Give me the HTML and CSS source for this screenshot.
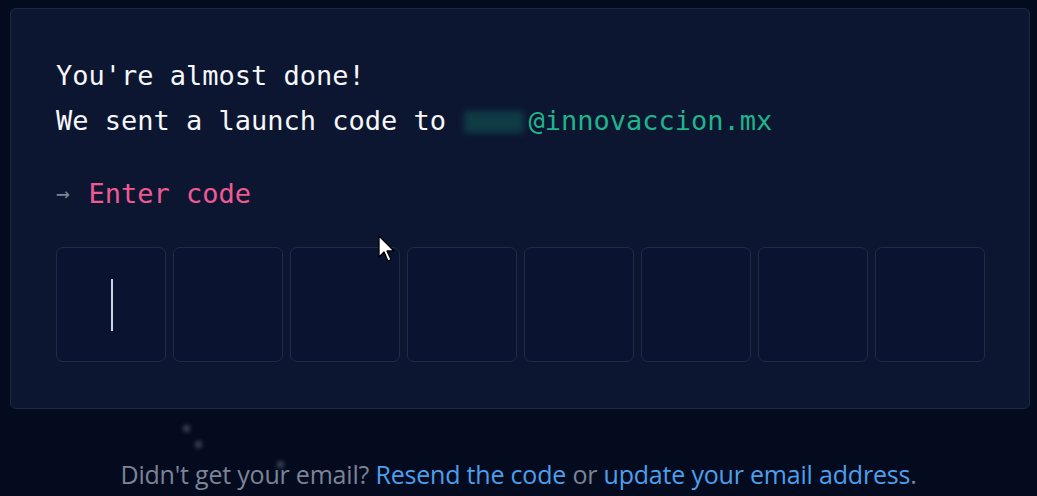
FILE: index.html
```html
<!DOCTYPE html>
<html>
<head>
<meta charset="utf-8">
<link rel="stylesheet" href="styles.css">
</head>
<body>
<main class="page">
  <section class="card">
    <p class="line">You're almost done!</p>
    <p class="line">We sent a launch code to <span class="blur"></span><span class="email">@innovaccion.mx</span></p>
    <p class="prompt"><span class="arrow">→</span> <span class="label">Enter code</span></p>
    <div class="codes">
      <div class="box"><span class="caret"></span></div>
      <div class="box"></div>
      <div class="box"></div>
      <div class="box"></div>
      <div class="box"></div>
      <div class="box"></div>
      <div class="box"></div>
      <div class="box"></div>
    </div>
    <svg class="pointer" width="18" height="28" viewBox="0 0 18 28"><path d="M1 1 L1 22 L6 17 L10 26 L13 24.5 L9 16 L16 16 Z" fill="#fff" stroke="#000" stroke-width="1.3" stroke-linejoin="round"/></svg>
  </section>
  <span class="dot d1"></span><span class="dot d2"></span><span class="dot d3"></span>
  <p class="footer">Didn't get your email? <a class="link">Resend the code</a> or <a class="link">update your email address</a>.</p>
</main>
</body>
</html>
```
FILE: styles.css
```css
html, body {
  margin: 0;
  padding: 0;
  background: #050b1e;
  height: 100%;
  overflow: hidden;
}
.page {
  position: relative;
  padding-top: 8px;
}
.card {
  position: relative;
  margin: 0 7px 0 10px;
  height: 401px;
  box-sizing: border-box;
  background: #0c1631;
  border: 1px solid #1d2845;
  border-radius: 6px;
  padding: 44px 0 0 45px;
  font-family: "DejaVu Sans Mono", monospace;
  font-size: 27px;
  color: #f5f7fa;
}
.line {
  margin: 0;
  line-height: 45px;
  height: 45px;
  white-space: pre;
}
.blur {
  display: inline-block;
  width: 60px;
  height: 22px;
  margin-left: 2px;
  margin-right: 4px;
  vertical-align: -3px;
  background: #0f3b45;
  filter: blur(3px);
  border-radius: 3px;
}
.email {
  color: #1fb48a;
}
.prompt {
  margin: 28px 0 0;
  line-height: 45px;
  height: 45px;
  white-space: pre;
}
.arrow {
  display: inline-block;
  width: 16.25px;
  color: #7b8496;
  font-size: 23px;
  vertical-align: 2px;
}
.label {
  color: #ef5a93;
}
.codes {
  display: flex;
  gap: 7px;
  margin-top: 31px;
}
.box {
  position: relative;
  width: 110px;
  height: 115px;
  box-sizing: border-box;
  border: 1px solid #1f2b49;
  border-radius: 7px;
  background: #0a1430;
  display: flex;
  align-items: center;
  justify-content: center;
}
.caret {
  width: 2px;
  height: 52px;
  background: #c9d3e6;
  margin-left: 2px;
}
.pointer {
  position: absolute;
  left: 367px;
  top: 226px;
}
.dot {
  position: absolute;
  width: 7px;
  height: 7px;
  border-radius: 50%;
  background: #3c4558;
  filter: blur(2px);
}
.d1 { left: 183px; top: 425px; }
.d2 { left: 195px; top: 441px; }
.d3 { left: 277px; top: 461px; }
.footer {
  margin: 0;
  position: relative;
  text-align: center;
  padding-top: 49px;
  font-family: "Open Sans", sans-serif;
  font-size: 25px;
  line-height: 32px;
  color: #7b8497;
  letter-spacing: -0.2px;
}
.link {
  color: #4d9fec;
}
```
